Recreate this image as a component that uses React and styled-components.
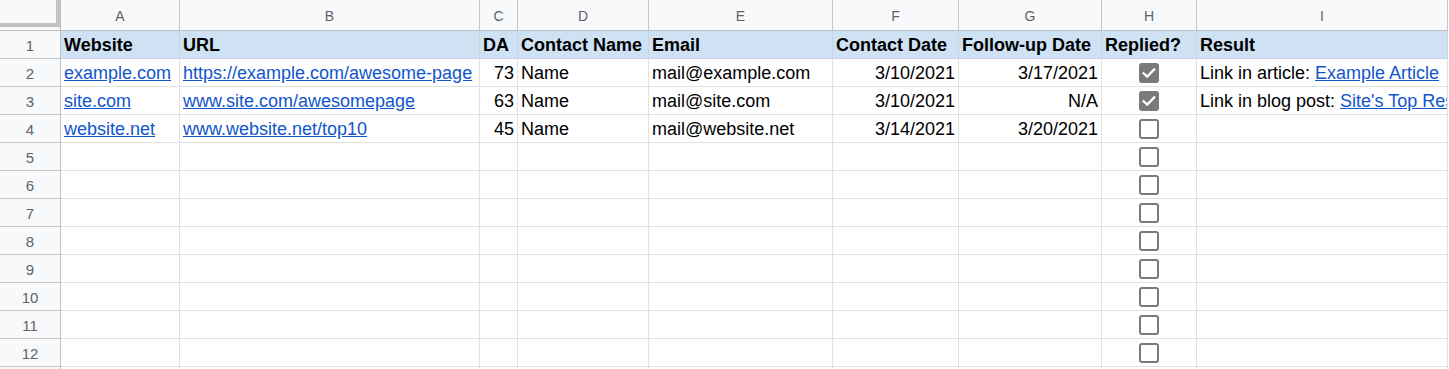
import styled, { createGlobalStyle } from "styled-components";

const GlobalStyle = createGlobalStyle`
    html, body {
        margin: 0;
        padding: 0;
        background: #ffffff;
        overflow: hidden;
    }
    * {
        box-sizing: border-box;
    }
`;

// column widths include the 1px right grid line
const columns = [
    { letter: "A", width: 119 },
    { letter: "B", width: 300 },
    { letter: "C", width: 38 },
    { letter: "D", width: 131 },
    { letter: "E", width: 184 },
    { letter: "F", width: 126 },
    { letter: "G", width: 143 },
    { letter: "H", width: 95 },
    { letter: "I", width: 251 },
];

const headings = ["Website", "URL", "DA", "Contact Name", "Email", "Contact Date", "Follow-up Date", "Replied?", "Result"];

const outreach = [
    {
        website: "example.com",
        url: "https://example.com/awesome-page",
        da: 73,
        name: "Name",
        email: "mail@example.com",
        contacted: "3/10/2021",
        followUp: "3/17/2021",
        replied: true,
        result: { label: "Link in article: ", link: "Example Article" },
    },
    {
        website: "site.com",
        url: "www.site.com/awesomepage",
        da: 63,
        name: "Name",
        email: "mail@site.com",
        contacted: "3/10/2021",
        followUp: "N/A",
        replied: true,
        result: { label: "Link in blog post: ", link: "Site's Top Resources" },
    },
    {
        website: "website.net",
        url: "www.website.net/top10",
        da: 45,
        name: "Name",
        email: "mail@website.net",
        contacted: "3/14/2021",
        followUp: "3/20/2021",
        replied: false,
        result: null,
    },
];

const Checkbox = ({ checked }) => (
    <CheckBox $checked={checked}>
        {checked && (
            <svg width="16" height="16" viewBox="0 0 16 16">
                <path d="M2.6 8.2 L6.2 11.6 L13.2 4.4" fill="none" stroke="#ffffff" strokeWidth="2.2" strokeLinecap="square" />
            </svg>
        )}
    </CheckBox>
);

const App = () => {
    const emptyRows = [...Array(8)].map((_, i) => i + 5);

    return (
        <>
            <GlobalStyle />
            <Sheet $template={columns.map((c) => `${c.width}px`).join(" ")}>
                {/* column letters */}
                <Corner>
                    <FreezeBars />
                </Corner>
                {columns.map((col) => (
                    <ColumnHeader key={col.letter}>{col.letter}</ColumnHeader>
                ))}

                {/* row 1: headings */}
                <RowHeader>1</RowHeader>
                {headings.map((h) => (
                    <HeadingCell key={h}>{h}</HeadingCell>
                ))}

                {/* data rows */}
                {outreach.map((row, i) => (
                    <Row key={row.website}>
                        <RowHeader>{i + 2}</RowHeader>
                        <Cell>
                            <Link>{row.website}</Link>
                        </Cell>
                        <Cell>
                            <Link>{row.url}</Link>
                        </Cell>
                        <Cell $align="right">{row.da}</Cell>
                        <Cell>{row.name}</Cell>
                        <Cell>{row.email}</Cell>
                        <Cell $align="right">{row.contacted}</Cell>
                        <Cell $align="right">{row.followUp}</Cell>
                        <Cell $align="center">
                            <Checkbox checked={row.replied} />
                        </Cell>
                        <Cell>
                            {row.result && (
                                <>
                                    {row.result.label}
                                    <Link>{row.result.link}</Link>
                                </>
                            )}
                        </Cell>
                    </Row>
                ))}

                {emptyRows.map((n) => (
                    <Row key={n}>
                        <RowHeader>{n}</RowHeader>
                        {columns.map((col) => (
                            <Cell key={col.letter} $align={col.letter === "H" ? "center" : "left"}>
                                {col.letter === "H" && <Checkbox checked={false} />}
                            </Cell>
                        ))}
                    </Row>
                ))}

                {/* top edge of row 13 peeks in at the bottom */}
                <Row>
                    <RowHeader />
                    {columns.map((col) => (
                        <Cell key={col.letter} />
                    ))}
                </Row>
            </Sheet>
        </>
    );
};

/* 스타일 */

const Sheet = styled.div`
    display: grid;
    grid-template-columns: 61px ${(p) => p.$template};
    grid-template-rows: 31px;
    grid-auto-rows: 28px;
    font-family: "Liberation Sans", Arial, sans-serif;
    color: #000000;
`;

const Row = styled.div`
    display: contents;
`;

const Corner = styled.div`
    background: #f8f9fa;
    border-right: 1px solid #c0c0c0;
    border-bottom: 1px solid #c0c0c0;
`;

const FreezeBars = styled.div`
    width: 60px;
    height: 27px;
    border-right: 4px solid #c2c2c2;
    border-bottom: 4px solid #c2c2c2;
`;

const ColumnHeader = styled.div`
    display: flex;
    align-items: center;
    justify-content: center;
    padding-top: 1px;
    background: #f8f9fa;
    border-right: 1px solid #c6c6c6;
    border-bottom: 1px solid #c0c0c0;
    font-size: 14px;
    color: #5f6368;
`;

const RowHeader = styled.div`
    display: flex;
    align-items: center;
    justify-content: center;
    padding-top: 1px;
    background: #f8f9fa;
    border-right: 1px solid #c0c0c0;
    border-bottom: 1px solid #c6c6c6;
    font-size: 15px;
    color: #5f6368;
`;

const Cell = styled.div`
    display: flex;
    align-items: center;
    justify-content: ${(p) => (p.$align === "right" ? "flex-end" : p.$align === "center" ? "center" : "flex-start")};
    padding: 1px 3px 0;
    border-right: 1px solid #e2e2e2;
    border-bottom: 1px solid #e2e2e2;
    font-size: 18px;
    white-space: pre;
    overflow: hidden;
`;

const HeadingCell = styled(Cell)`
    background: #cfe2f3;
    border-right-color: #c9d6e2;
    border-bottom-color: #c9d6e2;
    font-weight: bold;
`;

const Link = styled.span`
    color: #1155cc;
    text-decoration: underline;
`;

const CheckBox = styled.div`
    width: 20px;
    height: 20px;
    margin-top: -1px;
    flex-shrink: 0;
    display: flex;
    align-items: center;
    justify-content: center;
    border-radius: 3px;
    border: 2px solid #7a7a7a;
    background: ${(p) => (p.$checked ? "#7a7a7a" : "#ffffff")};
`;

export default App;
